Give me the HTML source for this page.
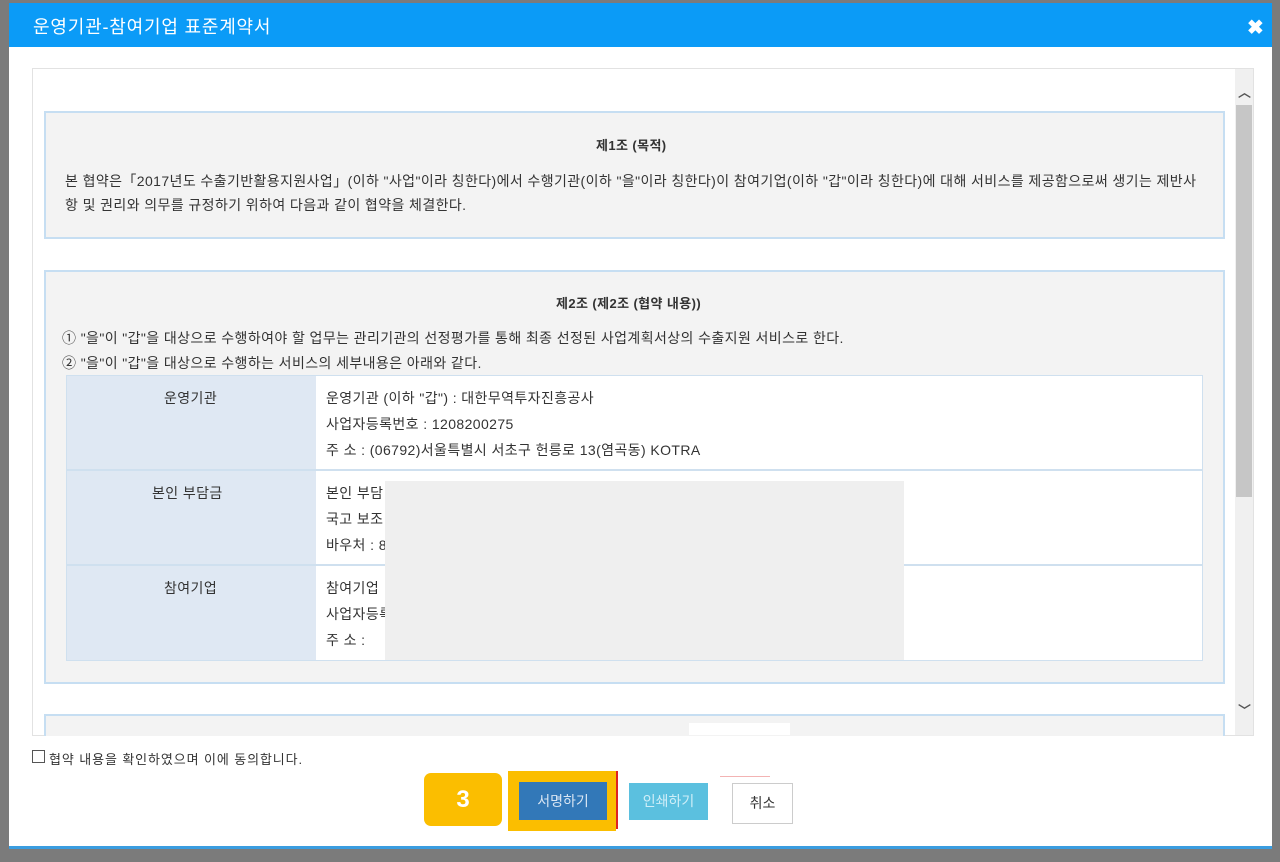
<!DOCTYPE html>
<html><head><meta charset="utf-8"><style>
*{margin:0;padding:0;box-sizing:border-box}
body{width:1280px;height:862px;background:#7b7b7b;position:relative;overflow:hidden;font-family:"Liberation Sans","Noto Sans CJK KR",sans-serif;color:#333;font-size:13px}
.a{position:absolute}
.box{position:absolute;background:#f3f3f3;border:2px solid #c6def2}
.t{position:absolute;white-space:nowrap;font-size:14px;letter-spacing:0.4px;color:#333}
.b{font-weight:bold}
</style></head><body>
<div class="a" style="left:9px;top:3px;width:1263px;height:846px;background:#fff;border-bottom:3px solid #3a9de0"></div>
<div class="a" style="left:9px;top:3px;width:1263px;height:44px;background:#0b9bf7"></div>
<div class="t" style="left:33px;top:13px;font-size:18px;letter-spacing:0.8px;color:#fff">운영기관-참여기업 표준계약서</div>
<div class="t b" style="left:1247px;top:15px;font-size:20px;color:#fff">✖</div>

<div class="a" style="left:32px;top:68px;width:1222px;height:668px;border:1px solid #e2e2e2"></div>
<div class="a" style="left:1235px;top:69px;width:18px;height:666px;background:#f0f0f0"></div>
<div class="a" style="left:1236px;top:105px;width:16px;height:392px;background:#c6c6c6"></div>
<div class="t b" style="left:1238px;top:82px;font-size:13px;color:#555">︿</div>
<div class="t b" style="left:1238px;top:700px;font-size:13px;color:#555">﹀</div>

<div class="box" style="left:44px;top:111px;width:1181px;height:128px"></div>
<div class="t b" style="left:596px;top:135px;font-size:13px">제1조 (목적)</div>
<div class="t" style="left:65px;top:171px">본 협약은「2017년도 수출기반활용지원사업」(이하 "사업"이라 칭한다)에서 수행기관(이하 "을"이라 칭한다)이 참여기업(이하 "갑"이라 칭한다)에 대해 서비스를 제공함으로써 생기는 제반사</div>
<div class="t" style="left:65px;top:195px">항 및 권리와 의무를 규정하기 위하여 다음과 같이 협약을 체결한다.</div>

<div class="box" style="left:44px;top:270px;width:1181px;height:414px"></div>
<div class="t b" style="left:556px;top:293px;font-size:13px">제2조 (제2조 (협약 내용))</div>
<div class="t" style="left:62px;top:328px">① "을"이 "갑"을 대상으로 수행하여야 할 업무는 관리기관의 선정평가를 통해 최종 선정된 사업계획서상의 수출지원 서비스로 한다.</div>
<div class="t" style="left:62px;top:353px">② "을"이 "갑"을 대상으로 수행하는 서비스의 세부내용은 아래와 같다.</div>

<div class="a" style="left:66px;top:375px;width:1137px;height:286px;background:#fff;border:1px solid #cfe0ef"></div>
<div class="a" style="left:67px;top:376px;width:249px;height:284px;background:#dfe8f3"></div>
<div class="a" style="left:67px;top:469px;width:1135px;height:2px;background:#cfe0ef"></div>
<div class="a" style="left:67px;top:564px;width:1135px;height:2px;background:#cfe0ef"></div>
<div class="t" style="left:164px;top:388px">운영기관</div>
<div class="t" style="left:152px;top:483px">본인 부담금</div>
<div class="t" style="left:164px;top:578px">참여기업</div>
<div class="t" style="left:326px;top:388px">운영기관 (이하 "갑") : 대한무역투자진흥공사</div>
<div class="t" style="left:326px;top:414px">사업자등록번호 : 1208200275</div>
<div class="t" style="left:326px;top:440px">주 소 : (06792)서울특별시 서초구 헌릉로 13(염곡동) KOTRA</div>
<div class="t" style="left:326px;top:483px">본인 부담</div>
<div class="t" style="left:326px;top:509px">국고 보조</div>
<div class="t" style="left:326px;top:535px">바우처 : 8</div>
<div class="t" style="left:326px;top:578px">참여기업</div>
<div class="t" style="left:326px;top:604px">사업자등록</div>
<div class="t" style="left:326px;top:630px">주 소 :</div>
<div class="a" style="left:385px;top:481px;width:519px;height:179px;background:#efefef"></div>

<div class="box" style="left:44px;top:714px;width:1181px;height:30px;border-bottom:none"></div>
<div class="a" style="left:689px;top:723px;width:101px;height:12px;background:#fff"></div>
<div class="a" style="left:33px;top:736px;width:1235px;height:12px;background:#fff"></div>

<div class="a" style="left:32px;top:750px;width:13px;height:13px;border:1px solid #555;background:#fff"></div>
<div class="t" style="left:49px;top:749px;font-size:13px;letter-spacing:0.9px">협약 내용을 확인하였으며 이에 동의합니다.</div>

<div class="a" style="left:424px;top:773px;width:78px;height:53px;background:#fbbe00;border-radius:7px;color:#fff;font-weight:bold;font-size:24px;text-align:center;line-height:53px">3</div>
<div class="a" style="left:508px;top:771px;width:108px;height:60px;background:#fbbe00"></div>
<div class="a" style="left:616px;top:771px;width:2px;height:58px;background:#d22"></div>
<div class="a" style="left:519px;top:782px;width:88px;height:38px;background:#3278b8;color:#d9e6f3;text-align:center;line-height:38px;font-size:14px">서명하기</div>
<div class="a" style="left:629px;top:783px;width:79px;height:37px;background:#5bc0df;color:#cfeef8;text-align:center;line-height:37px;font-size:14px">인쇄하기</div>
<div class="a" style="left:720px;top:776px;width:50px;height:1px;background:#f3b3b3"></div>
<div class="a" style="left:732px;top:783px;width:61px;height:41px;background:#fff;border:1px solid #ccc;text-align:center;line-height:39px;font-size:14px">취소</div>
</body></html>
